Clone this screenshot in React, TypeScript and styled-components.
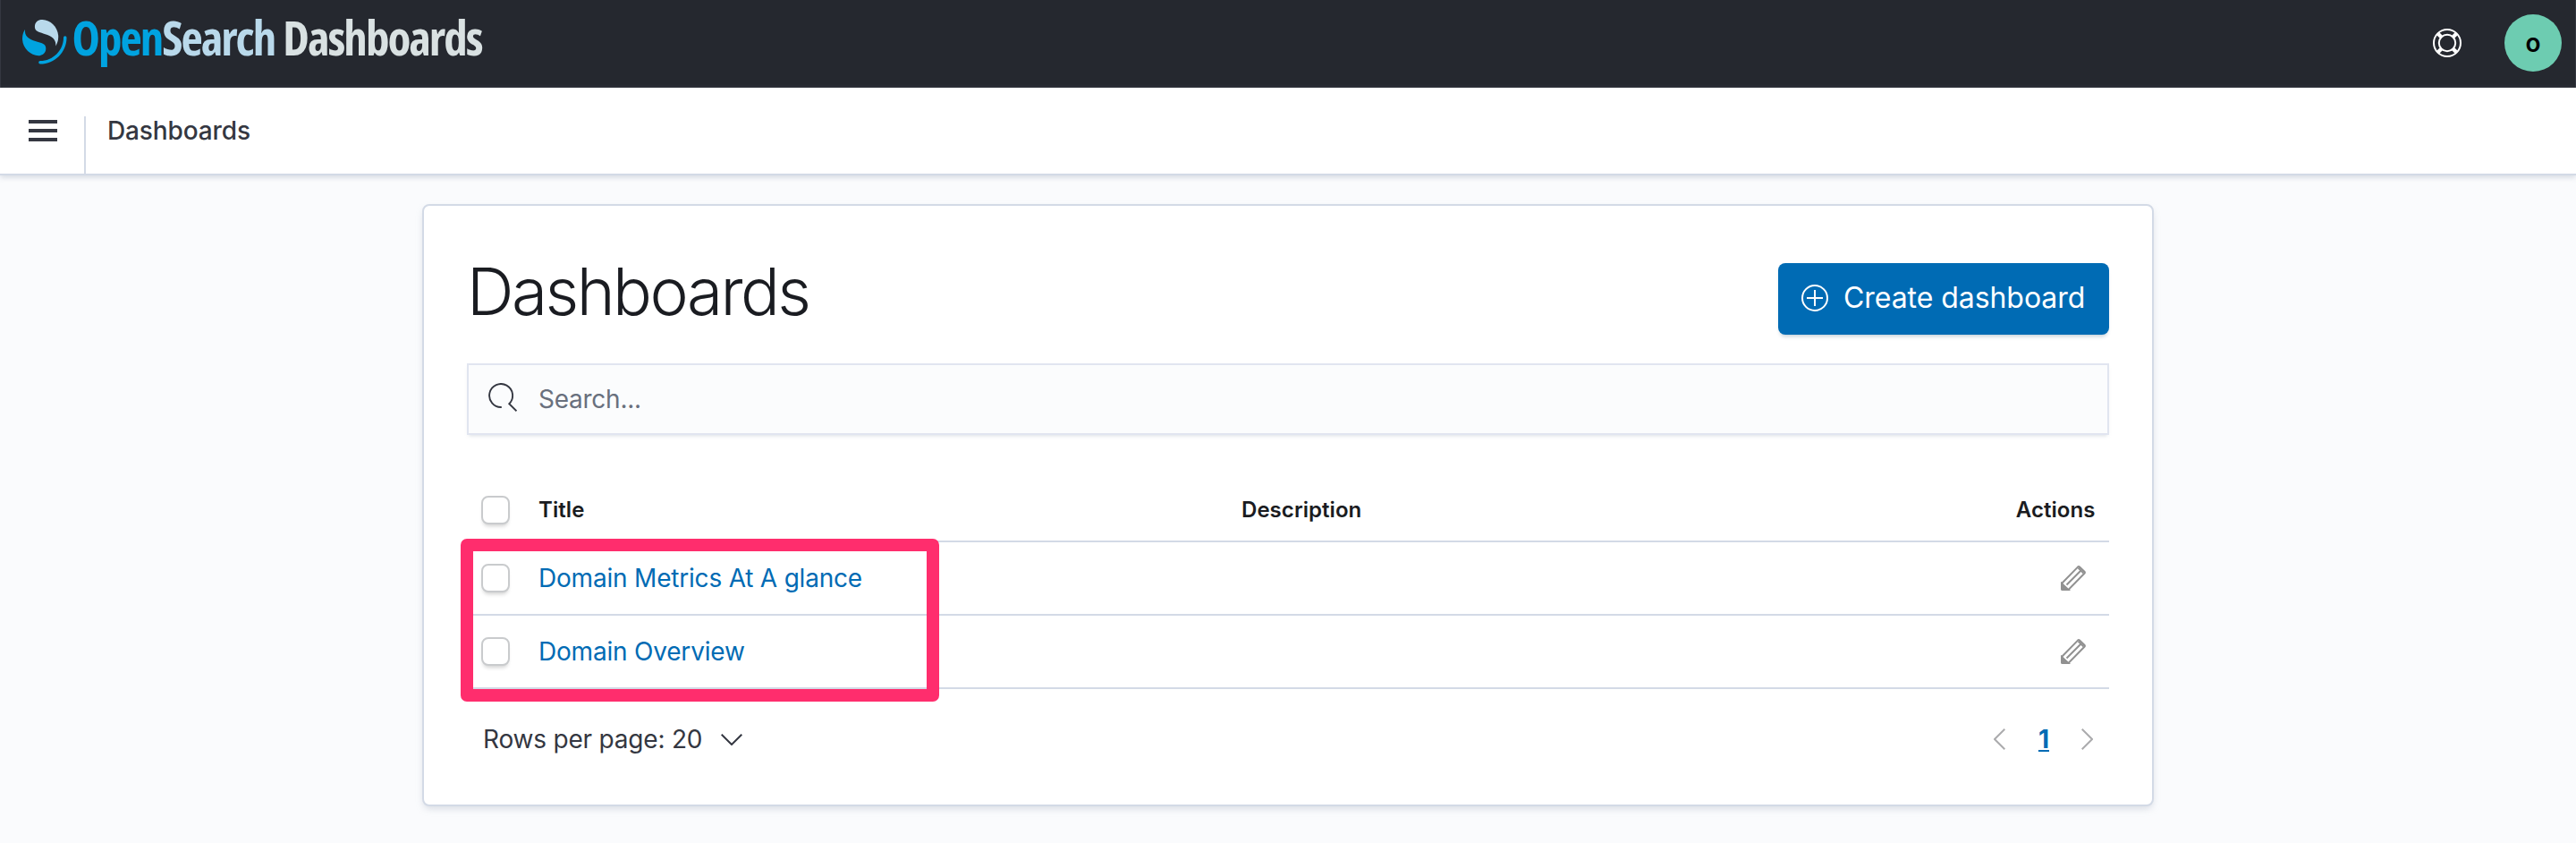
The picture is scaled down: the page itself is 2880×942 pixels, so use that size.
import React from "react";
import styled, { createGlobalStyle } from "styled-components";

const Global = createGlobalStyle`
  * { box-sizing: border-box; }
  body { margin: 0; background: #fafbfd; font-family: Inter, "Liberation Sans", sans-serif; color: #343741; }
  button, input { font-family: inherit; margin: 0; }
  button { border: 0; padding: 0; background: none; }
`;

const Page = styled.div`
  height: 942px;
  display: flex;
  flex-direction: column;
  align-items: center;
  overflow: hidden;
`;

const TopBar = styled.header`
  width: 100%;
  height: 98px;
  flex: none;
  background: #25282f;
  display: flex;
  align-items: flex-start;
  justify-content: space-between;
  padding: 0 15px 0 24px;
  border-left: 1px solid #343741;
  border-right: 1px solid #343741;
`;

const Brand = styled.div`
  display: flex;
  align-items: flex-start;
`;

const LogoMark = styled.svg`
  display: block;
  margin: 22px 6px 0 0;
`;

const Word = styled.span<{ $color: string; $gap?: number }>`
  color: ${(p) => p.$color};
  margin-left: ${(p) => p.$gap ?? 0}px;
  padding-top: 6px;
  font-family: "Open Sans", sans-serif;
  font-size: 53px;
  line-height: 72px;
  font-weight: 700;
  font-stretch: 75%;
  letter-spacing: -2px;
`;

const Controls = styled.div`
  display: flex;
  align-items: center;
  gap: 48px;
  height: 96px;
`;

const Avatar = styled.div`
  width: 64px;
  height: 64px;
  border-radius: 50%;
  background: #6dccb1;
  color: #000;
  display: flex;
  align-items: center;
  justify-content: center;
  font-size: 28px;
  font-weight: 600;
  line-height: 64px;
`;

const SubBar = styled.nav`
  width: 100%;
  height: 98px;
  flex: none;
  background: #fff;
  border-bottom: 2px solid #d3dae6;
  box-shadow: 0 2px 6px rgba(152, 162, 179, 0.4);
  display: flex;
`;

const MenuButton = styled.button`
  width: 94px;
  display: flex;
  flex-direction: column;
  gap: 6px;
  padding: 36px 0 0 32px;
`;

const MenuLine = styled.span`
  width: 32px;
  height: 4px;
  background: #343741;
`;

const Crumb = styled.div`
  margin-top: 32px;
  border-left: 2px solid #d3dae6;
  padding-left: 24px;
  font-size: 28px;
  font-weight: 500;
  line-height: 32px;
  letter-spacing: -0.12px;
`;

const Panel = styled.main`
  position: relative;
  width: 1936px;
  height: 673px;
  margin-top: 32px;
  flex: none;
  background: #fff;
  border: 2px solid #d3dae6;
  border-radius: 8px;
  padding: 64px 48px 0;
  box-shadow: 0 4px 8px -2px rgba(152, 162, 179, 0.4);
`;

const Heading = styled.div`
  display: flex;
  justify-content: space-between;
  height: 112px;
`;

const Title = styled.h1`
  margin: -8px 0 0;
  font-size: 73px;
  line-height: 80px;
  font-weight: 300;
  letter-spacing: -2.55px;
  color: #1a1c21;
`;

const CreateButton = styled.button`
  width: 370px;
  height: 80px;
  border-radius: 8px;
  background: #006bb4;
  color: #fff;
  display: flex;
  align-items: center;
  padding: 0 0 3px 25px;
  gap: 16px;
  font-size: 32px;
  letter-spacing: -0.06px;
  box-shadow: 0 4px 4px -2px rgba(54, 97, 126, 0.3);
  white-space: nowrap;
`;

const SearchBox = styled.label`
  height: 80px;
  border: 2px solid #e1e5f0;
  background: #fbfcfd;
  display: flex;
  align-items: center;
  padding-left: 22px;
  gap: 24px;
  box-shadow: 0 3px 4px -2px rgba(152, 162, 179, 0.35);
`;

const SearchIcon = styled.svg`
  flex: none;
  margin-bottom: 4px;
`;

const SearchInput = styled.input`
  flex: 1;
  border: 0;
  padding: 0;
  outline: 0;
  background: transparent;
  font-size: 28px;
  letter-spacing: -0.25px;
  &::placeholder { color: #69707d; opacity: 1; }
`;

const Table = styled.section`
  margin-top: 48px;
`;

const Row = styled.div<{ $head?: boolean }>`
  display: grid;
  grid-template-columns: 80px 786px 1fr auto;
  align-items: center;
  height: ${(p) => (p.$head ? 72 : 82)}px;
  border-bottom: 2px solid #d3dae6;
  padding-right: ${(p) => (p.$head ? 15.5 : 26)}px;
  font-size: ${(p) => (p.$head ? 24 : 28)}px;
  font-weight: ${(p) => (p.$head ? 600 : 400)};
  letter-spacing: ${(p) => (p.$head ? 0.05 : -0.2)}px;
  color: #1a1c21;
`;

const Check = styled.span<{ $low?: boolean }>`
  width: 32px;
  height: 32px;
  margin: ${(p) => (p.$low ? 2 : 0)}px 0 0 16px;
  border: 2px solid #c9cbcd;
  border-radius: 8px;
  background: #fff;
  box-shadow: 0 4px 4px -2px rgba(0, 0, 0, 0.18);
`;

const DashLink = styled.a`
  color: #006bb4;
`;

const Footer = styled.div`
  display: flex;
  align-items: center;
  justify-content: space-between;
  height: 112px;
  padding: 0 18px;
`;

const RowsButton = styled.button`
  display: flex;
  align-items: center;
  gap: 21px;
  font-size: 28px;
  letter-spacing: -0.2px;
  color: #343741;
`;

const Pager = styled.div`
  display: flex;
  align-items: center;
`;

const PageNumber = styled.a`
  margin: 0 36px 0 37px;
  font-size: 28px;
  font-weight: 700;
  color: #006bb4;
  text-decoration: underline;
`;

const Highlight = styled.div`
  position: absolute;
  left: 41px;
  top: 372px;
  width: 535px;
  height: 182px;
  border: 14px solid #ff2d6d;
  border-radius: 7px;
`;

const HelpIcon = () => (
  <svg width="32" height="32" viewBox="0 0 16 16" fill="none" stroke="#fff">
    <circle cx="8" cy="8" r="7.5" />
    <circle cx="8" cy="8" r="4.6" />
    <path strokeWidth="2.1" d="M2.9 2.9l2 2M13.1 2.9l-2 2M2.9 13.1l2-2M13.1 13.1l-2-2" />
  </svg>
);

const PencilIcon = () => (
  <svg width="28" height="28" viewBox="0 0 28 28" fill="none" stroke="#919191" strokeWidth="2">
    <path d="M1 20 19 1.6q1-.9 2 0l5.4 5.2q1 1 0 2L8.5 27H2q-1 0-1-1z" />
    <path d="M1 20 8.5 27H2q-1 0-1-1z" fill="#919191" />
    <path d="M6.5 21.5 22.5 5.5M19.5 2.5l6 6" />
  </svg>
);

const Arrow = ({ flip }: { flip?: boolean }) => (
  <svg width="13" height="24" viewBox="0 0 13 24" fill="none" stroke="#ababad" strokeWidth="2">
    <path d={flip ? "M.7.7 12 12 .7 23.3" : "M12.3.7 1 12l11.3 11.3"} />
  </svg>
);

const dashboards = ["Domain Metrics At A glance", "Domain Overview"];

export default function App() {
  return (
    <Page>
      <Global />
      <TopBar>
        <Brand>
          <LogoMark width="49.5" height="49.5" viewBox="0 0 64 64">
            <path fill="#00a3e0" d="M61.74 23.5a2.26 2.26 0 0 0-2.27 2.26c0 18.62-15.09 33.71-33.71 33.71a2.26 2.26 0 1 0 0 4.53C46.88 64 64 46.88 64 25.76a2.26 2.26 0 0 0-2.26-2.26z" />
            <path fill="#b9d9eb" d="M48.08 38c2.18-3.55 4.28-8.28 3.87-14.91C51.09 9.37 38.66-1.05 26.92.08c-4.6.44-9.31 4.19-8.9 10.9.19 2.91 1.61 4.63 3.93 5.95 2.2 1.25 5.03 2.05 8.23 2.95 3.88 1.09 8.37 2.31 11.82 4.86 4.14 3.05 6.97 6.58 6.08 13.26z" />
            <path fill="#00a3e0" d="M3.92 14C1.74 17.55-.36 22.28.05 28.91.91 42.63 13.34 53.05 25.08 51.92c4.6-.44 9.31-4.19 8.9-10.9-.19-2.91-1.61-4.63-3.93-5.95-2.2-1.25-5.03-2.05-8.23-2.95-3.88-1.09-8.37-2.31-11.82-4.86C5.86 24.21 3.03 20.68 3.92 14z" />
          </LogoMark>
          <Word $color="#00a3e0">Open</Word>
          <Word $color="#b9d9eb">Search</Word>
          <Word $color="#d9e1e2" $gap={9}>Dashboards</Word>
        </Brand>
        <Controls>
          <HelpIcon />
          <Avatar>o</Avatar>
        </Controls>
      </TopBar>
      <SubBar>
        <MenuButton aria-label="Menu">
          <MenuLine /><MenuLine /><MenuLine />
        </MenuButton>
        <Crumb>Dashboards</Crumb>
      </SubBar>
      <Panel>
        <Heading>
          <Title>Dashboards</Title>
          <CreateButton>
            <svg width="32" height="32" viewBox="0 0 32 32" fill="none" stroke="#fff" strokeWidth="2">
              <circle cx="16" cy="16" r="14" />
              <path d="M7 16h18M16 7v18" />
            </svg>
            Create dashboard
          </CreateButton>
        </Heading>
        <SearchBox>
          <SearchIcon width="32" height="32" viewBox="0 0 32 32" fill="none" stroke="#343741" strokeWidth="1.9">
            <path d="M14.8 27A13 13 0 1 1 23.3 23.2L31.5 31.3" />
          </SearchIcon>
          <SearchInput placeholder="Search..." />
        </SearchBox>
        <Table>
          <Row $head>
            <Check $low /><span>Title</span><span>Description</span><span>Actions</span>
          </Row>
          {dashboards.map((name) => (
            <Row key={name}>
              <Check /><DashLink>{name}</DashLink><span /><PencilIcon />
            </Row>
          ))}
        </Table>
        <Footer>
          <RowsButton>
            Rows per page: 20
            <svg width="24" height="13" viewBox="0 0 24 13" fill="none" stroke="#343741" strokeWidth="2">
              <path d="M.7.7 12 12 23.3.7" />
            </svg>
          </RowsButton>
          <Pager>
            <Arrow />
            <PageNumber>1</PageNumber>
            <Arrow flip />
          </Pager>
        </Footer>
        <Highlight />
      </Panel>
    </Page>
  );
}
